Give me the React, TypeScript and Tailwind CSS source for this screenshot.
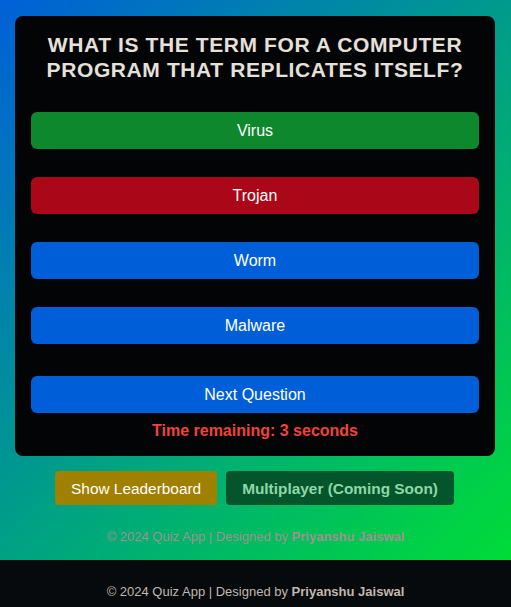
import React from 'react';

const options = [
  { label: 'Virus', color: 'bg-[#0e882c]' },
  { label: 'Trojan', color: 'bg-[#aa0818]' },
  { label: 'Worm', color: 'bg-[#005fd8]' },
  { label: 'Malware', color: 'bg-[#005fd8]' },
];

const FooterText: React.FC<{ className: string }> = ({ className }) => (
  <p className={`text-[13px] ${className}`}>
    © 2024 Quiz App | Designed by <span className="font-bold">Priyanshu Jaiswal</span>
  </p>
);

export default function App() {
  return (
    <div className="min-h-[607px] flex flex-col font-['Liberation_Sans',Arial,sans-serif]">
      {/* Main gradient area */}
      <main className="h-[560px] bg-[linear-gradient(135deg,#0060d8,#00dc38)] pt-4 flex flex-col items-center">
        <div className="w-[480px] self-start ml-[15px] bg-[#020406] rounded-lg px-4 pt-4 pb-[13px]">
          <h2 className="text-center text-[21px] leading-[1.2] font-bold uppercase tracking-[0.6px] text-[#e5e0da]">
            What is the term for a computer program that replicates itself?
          </h2>

          <div className="mt-[30px] flex flex-col gap-[28px]">
            {options.map((o) => (
              <button
                key={o.label}
                className={`h-[37px] w-full rounded-md ${o.color} text-white text-base flex items-center justify-center`}
              >
                {o.label}
              </button>
            ))}
          </div>

          <button className="mt-[32px] h-[37px] w-full rounded-md bg-[#005fd8] text-white text-base flex items-center justify-center">
            Next Question
          </button>
          <p className="mt-[6px] text-center font-bold text-base text-[#f44336]">
            Time remaining: 3 seconds
          </p>
        </div>

        <div className="mt-[15px] ml-[-2px] flex gap-[9px]">
          <button className="h-[34px] px-4 rounded bg-[#a08000] text-white text-[15.4px]">
            Show Leaderboard
          </button>
          <button className="h-[34px] px-[16px] rounded bg-[#04552b] text-[#8fd8a8] font-bold text-[15.4px]">
            Multiplayer (Coming Soon)
          </button>
        </div>

        <FooterText className="mt-[22px] text-[#a09090]" />
      </main>

      {/* Footer bar */}
      <footer className="h-[47px] bg-[#070a0c] flex items-end justify-center pb-[6px]">
        <FooterText className="text-[#c0b8b0]" />
      </footer>
    </div>
  );
}
